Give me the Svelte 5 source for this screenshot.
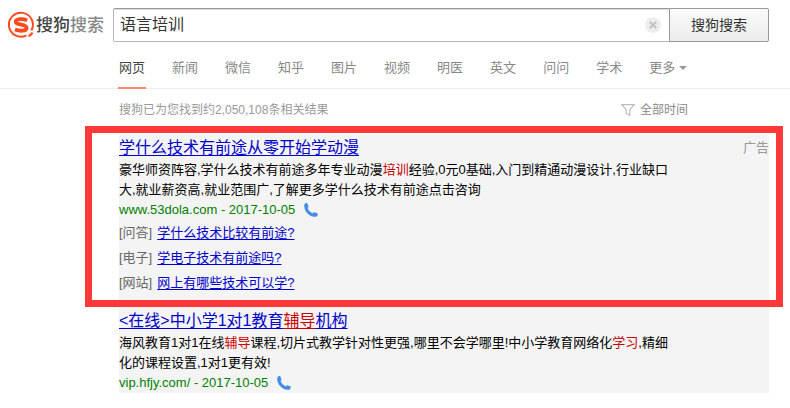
<script>
  let query = $state('语言培训');

  const tabs = ['网页', '新闻', '微信', '知乎', '图片', '视频', '明医', '英文', '问问', '学术'];
  let active = $state('网页');

  // parts marked `hit` are matched keywords, drawn in red
  const results = [
    {
      framed: true,
      ad: true,
      title: [{ text: '学什么技术有前途从零开始学动漫' }],
      desc: [
        { text: '豪华师资阵容,学什么技术有前途多年专业动漫' },
        { text: '培训', hit: true },
        { text: '经验,0元0基础,入门到精通动漫设计,行业缺口大,就业薪资高,就业范围广,了解更多学什么技术有前途点击咨询' }
      ],
      site: 'www.53dola.com - 2017-10-05',
      links: [
        { tag: '问答', text: '学什么技术比较有前途?' },
        { tag: '电子', text: '学电子技术有前途吗?' },
        { tag: '网站', text: '网上有哪些技术可以学?' }
      ]
    },
    {
      title: [{ text: '<在线>中小学1对1教育' }, { text: '辅导', hit: true }, { text: '机构' }],
      desc: [
        { text: '海风教育1对1在线' },
        { text: '辅导', hit: true },
        { text: '课程,切片式教学针对性更强,哪里不会学哪里!中小学教育网络化' },
        { text: '学习', hit: true },
        { text: ',精细化的课程设置,1对1更有效!' }
      ],
      site: 'vip.hfjy.com/ - 2017-10-05',
      links: []
    }
  ];
</script>

{#snippet parts(list)}
  {#each list as part}{#if part.hit}<em>{part.text}</em>{:else}{part.text}{/if}{/each}
{/snippet}

<header class="top">
  <a class="logo" href="#home">
    <svg width="28" height="28" viewBox="0 0 28 28" aria-hidden="true">
      <path d="M18.5 24.3A12 12 0 1 1 23.4 19.5" fill="none" stroke="#fb4a1e" stroke-width="2" />
      <path d="M20.2 24Q22.6 23 23.6 21L25.4 22.2Q23.8 25.2 20.8 26.2Z" fill="#fb4a1e" />
      <path d="M19.2 9.4C15.4 7.6 7.6 7.4 7.7 10.9C7.8 14.5 18.5 12.7 18.6 16.8C18.7 20.6 11 20.2 7 18.5" fill="none" stroke="#fb4a1e" stroke-width="3.8" />
    </svg>
    <span class="logo-text">搜狗<span>搜索</span></span>
  </a>
  <form class="search" onsubmit={(e) => e.preventDefault()}>
    <div class="field">
      <input type="text" aria-label="搜索" bind:value={query} />
      <button type="button" class="clear" aria-label="清空" onclick={() => (query = '')}>
        <svg width="16" height="16" viewBox="0 0 16 16">
          <circle cx="8" cy="8" r="8" fill="#eee" />
          <path d="M4.8 4.8L11.2 11.2M11.2 4.8L4.8 11.2" stroke="#c4c4c4" stroke-width="2.2" />
        </svg>
      </button>
    </div>
    <button class="submit">搜狗搜索</button>
  </form>
</header>

<nav class="tabs">
  {#each tabs as tab}
    <a href="#{tab}" class:active={tab === active} onclick={() => (active = tab)}>{tab}</a>
  {/each}
  <button class="more">
    更多
    <svg width="8" height="4" viewBox="0 0 8 4"><path d="M0 0H8L4 4Z" fill="#999" /></svg>
  </button>
</nav>

<main>
  <div class="info">
    <span>搜狗已为您找到约2,050,108条相关结果</span>
    <button class="time">
      <svg width="14" height="12" viewBox="0 0 14 12">
        <path d="M1 .7H13L8.8 5.6V11.3L5.2 9.5V5.6Z" fill="none" stroke="#bbb" stroke-width="1.2" />
      </svg>
      全部时间
    </button>
  </div>

  <div class="results">
    {#each results as item}
      <article class:framed={item.framed}>
        <div class="head">
          <h3><a href="#result">{@render parts(item.title)}</a></h3>
          {#if item.ad}<span class="ad">广告</span>{/if}
        </div>
        <p class="desc">{@render parts(item.desc)}</p>
        <div class="site">
          <span>{item.site}</span>
          <svg width="14" height="14" viewBox="0 0 14 14" aria-hidden="true">
            <path d="M.4 1.2Q1.6-.2 3.2.1L4.5 3.4Q4.4 4.4 3.4 5.1Q4.8 8.6 8.6 10.4Q9.4 9.3 10.4 9.3L13.7 10.5Q14.2 12.4 12.6 13.5C6.4 15-1 8.2.4 1.2Z" fill="#428ce4" />
          </svg>
        </div>
        {#if item.links.length}
          <ul>
            {#each item.links as link}
              <li><span>[{link.tag}]</span><a href="#link">{link.text}</a></li>
            {/each}
          </ul>
        {/if}
      </article>
    {/each}
  </div>
</main>

<style>
  :global(body) {
    background: #fff;
    font-family: 'Liberation Sans', Arial, 'Noto Sans CJK SC', sans-serif;
    font-size: 13px;
    line-height: 20px;
    color: #000;
  }

  button {
    font: inherit;
    color: inherit;
    background: none;
    border: 0;
    padding: 0;
    cursor: pointer;
  }

  svg {
    display: block;
  }

  .top {
    display: flex;
    align-items: center;
    gap: 9px;
    max-width: 761px;
    padding: 8px 21px 0 8px;
  }

  .logo {
    display: flex;
    align-items: center;
    flex: none;
    width: 96px;
    text-decoration: none;
  }

  .logo-text {
    padding-top: 2px;
    font-size: 17px;
    font-weight: 500;
    color: #444;
    white-space: nowrap;
  }

  .logo-text span {
    color: #888;
  }

  .search {
    display: flex;
    flex: 1;
    height: 34px;
  }

  .field {
    display: flex;
    align-items: center;
    flex: 1;
    min-width: 0;
    padding: 0 8px 0 6px;
    border: 1px solid #b5b5b5;
    border-top-color: #999;
    border-right: 0;
    border-radius: 2px 0 0 2px;
    box-shadow: inset 0 1px #ddd;
  }

  .field input {
    flex: 1;
    min-width: 0;
    border: 0;
    outline: 0;
    padding: 0;
    background: none;
    font: inherit;
    font-size: 16px;
    color: #333;
  }

  .submit {
    width: 100px;
    border: 1px solid #999;
    border-radius: 0 2px 2px 0;
    background: linear-gradient(#fbfbfb, #ececec);
    font-size: 14px;
    color: #333;
  }

  .tabs {
    display: flex;
    gap: 25px;
    padding: 16px 0 0 118px;
    border-bottom: 1px solid #eee;
    color: #888;
  }

  .tabs a,
  .more {
    margin-bottom: -1px;
    padding: 0 1px 9px;
    border-bottom: 2px solid transparent;
    color: inherit;
    text-decoration: none;
    white-space: nowrap;
  }

  .tabs .active {
    color: #444;
    border-color: #ff8a73;
  }

  .more {
    display: flex;
    align-items: center;
    gap: 4px;
  }

  main {
    max-width: 650px;
    padding: 0 21px 15px 119px;
  }

  .info {
    display: flex;
    justify-content: space-between;
    max-width: 569px;
    padding: 11px 0 15px;
    font-size: 12px;
    color: #999;
  }

  .time {
    display: flex;
    align-items: center;
    gap: 5px;
    color: #888;
  }

  .results {
    padding-top: 3px;
    background: #f4f4f4;
  }

  article + article {
    margin-top: 16px;
  }

  /* red marker box around the first result */
  .framed {
    position: relative;
  }

  .framed::after {
    content: '';
    position: absolute;
    inset: -12px -14px -12px -34px;
    border: 7px solid #fd3838;
    pointer-events: none;
  }

  .head {
    display: flex;
    justify-content: space-between;
    padding-bottom: 2px;
  }

  h3 {
    margin: 0;
    font-size: 16px;
    font-weight: normal;
  }

  h3 a,
  h3 em,
  li a {
    color: #00c;
    text-decoration: underline;
    text-underline-offset: 2px;
    text-decoration-thickness: 1px;
  }

  em,
  h3 em {
    font-style: normal;
    color: #c00;
  }

  .ad {
    color: #999;
  }

  .desc {
    max-width: 555px;
    margin: 0;
  }

  .site {
    display: flex;
    align-items: center;
    gap: 9px;
    color: #007f00;
  }

  ul {
    list-style: none;
    margin: 0;
    padding: 0;
  }

  li {
    display: flex;
    gap: 5px;
    line-height: 25px;
    color: #666;
  }
</style>
